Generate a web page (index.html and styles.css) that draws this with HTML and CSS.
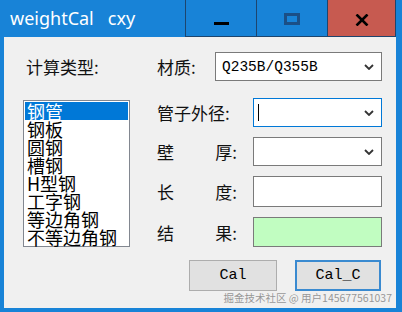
FILE: index.html
```html
<!DOCTYPE html>
<html lang="zh-CN">
<head>
    <meta charset="UTF-8">
    <title>weightCal</title>
    <link rel="stylesheet" href="styles.css">
</head>
<body>

<div class="window">
    <div class="titlebar">
        <span class="title">weightCal&nbsp;&nbsp; cxy</span>
        <div class="cap-btn"><span class="min-bar"></span></div>
        <div class="cap-btn"><span class="max-box"></span></div>
        <div class="cap-btn close">
            <svg width="14" height="12" viewBox="0 0 14 12">
                <path d="M1.5 0.5 L12.5 11.5 M12.5 0.5 L1.5 11.5" stroke="#000" stroke-width="2.6" fill="none"/>
            </svg>
        </div>
    </div>

    <div class="client">
        <div class="form">
            <div class="lbl type-lbl">计算类型:</div>

            <div class="row">
                <span class="lbl short">材质:</span>
                <div class="combo wide">
                    <span class="val">Q235B/Q355B</span>
                    <svg class="chev" width="10" height="6" viewBox="0 0 10 6"><path d="M1 1 L5 5 L9 1" stroke="#333" stroke-width="1.8" fill="none"/></svg>
                </div>
            </div>

            <ul class="listbox">
                <li class="sel">钢管</li>
                <li>钢板</li>
                <li>圆钢</li>
                <li>槽钢</li>
                <li>H型钢</li>
                <li>工字钢</li>
                <li>等边角钢</li>
                <li>不等边角钢</li>
            </ul>

            <div class="fields">
                <div class="row">
                    <span class="lbl">管子外径:</span>
                    <div class="combo focus">
                        <span class="caret"></span>
                        <svg class="chev" width="10" height="6" viewBox="0 0 10 6"><path d="M1 1 L5 5 L9 1" stroke="#333" stroke-width="1.8" fill="none"/></svg>
                    </div>
                </div>
                <div class="row">
                    <span class="lbl spread"><span>壁</span><span>厚:</span></span>
                    <div class="combo">
                        <svg class="chev" width="10" height="6" viewBox="0 0 10 6"><path d="M1 1 L5 5 L9 1" stroke="#333" stroke-width="1.8" fill="none"/></svg>
                    </div>
                </div>
                <div class="row tall">
                    <span class="lbl spread"><span>长</span><span>度:</span></span>
                    <div class="edit"></div>
                </div>
                <div class="row tall2">
                    <span class="lbl spread"><span>结</span><span>果:</span></span>
                    <div class="edit result"></div>
                </div>
                <div class="buttons">
                    <button class="btn cal">Cal</button>
                    <button class="btn cal-c">Cal_C</button>
                </div>
            </div>
        </div>

        <div class="watermark">掘金技术社区 @ 用户145677561037</div>
    </div>
</div>

</body>
</html>
```

FILE: styles.css
```css
body {
    margin: 0;
    font-family: "Noto Sans CJK SC", sans-serif;
}

.window {
    width: 402px;
    height: 312px;
    background: #1883d7;
    display: flex;
    flex-direction: column;
    padding-bottom: 4px;
    box-sizing: border-box;
}

.titlebar {
    height: 37px;
    display: flex;
    padding-right: 6px;
    flex-shrink: 0;
}

.title {
    flex: 1;
    color: #fff;
    font-family: "Noto Sans", sans-serif;
    font-size: 18px;
    line-height: 37px;
    padding-left: 10px;
}

.cap-btn {
    width: 70px;
    border-left: 1px solid #1d456e;
    border-bottom: 1px solid #1d456e;
    display: flex;
    align-items: center;
    justify-content: center;
}

.cap-btn.close {
    width: 67px;
    background: #c75a50;
    border-right: 1px solid #1d456e;
}

.min-bar {
    width: 15px;
    height: 3px;
    background: #000;
    margin-top: 10px;
}

.max-box {
    width: 10px;
    height: 6px;
    border: 3px solid #1b4f86;
    margin-top: 1px;
}

.close svg {
    margin-top: 3px;
}

.client {
    flex: 1;
    margin: 0 6px 0 4px;
    background: #f0f0f0;
    position: relative;
    padding: 15px 0 0 19px;
}

.form {
    display: grid;
    grid-template-columns: 107px 225px;
    column-gap: 27px;
    row-gap: 17px;
    align-items: start;
}

.lbl {
    font-size: 17px;
    color: #111;
    white-space: nowrap;
}

.type-lbl {
    line-height: 29px;
    padding-left: 3px;
}

.row {
    display: flex;
    align-items: center;
    height: 29px;
}

.row.tall {
    height: 31px;
}

.row.tall2 {
    height: 30px;
}

.row .lbl {
    width: 96px;
    flex-shrink: 0;
}

.row .lbl.short {
    width: 58px;
}

/* 两个字的标签拉开，冒号和“管子外径:”对齐 */
.row .lbl.spread {
    display: flex;
    justify-content: space-between;
    width: 80px;
    margin-right: 16px;
}

.combo,
.edit {
    flex: 1;
    align-self: stretch;
    background: #fff;
    border: 1px solid #7a7a7a;
    display: flex;
    align-items: center;
    position: relative;
}

.combo.focus {
    border-color: #0078d7;
}

.val {
    font-family: "Liberation Mono", monospace;
    font-size: 14.5px;
    padding-left: 6px;
    flex: 1;
    color: #000;
}

.caret {
    width: 1px;
    height: 17px;
    background: #000;
    margin-left: 4px;
}

.chev {
    margin-left: auto;
    margin-right: 7px;
}

.edit.result {
    background: #c1fdc1;
}

.listbox {
    list-style: none;
    margin: 2px 0 0;
    padding: 1px;
    background: #fff;
    border: 1px solid #828790;
    height: 143px;
}

.listbox li {
    font-size: 18px;
    line-height: 18px;
    height: 18px;
    padding-left: 2px;
    color: #000;
    white-space: nowrap;
}

.listbox li.sel {
    background: #0078d7;
    color: #fff;
}

.fields {
    display: flex;
    flex-direction: column;
    gap: 10px;
}

.buttons {
    display: flex;
    gap: 18px;
    margin: 3px 0 0 32px;
}

.btn {
    height: 31px;
    background: #e1e1e1;
    border: 1px solid #adadad;
    font-family: "Liberation Mono", monospace;
    font-size: 15px;
    color: #000;
    padding: 0;
}

.btn.cal {
    width: 88px;
}

.btn.cal-c {
    width: 86px;
    border: 2px solid #3a8ad0;
}

.watermark {
    position: absolute;
    right: 4px;
    bottom: 3px;
    font-size: 10.5px;
    color: rgba(110, 110, 110, 0.7);
    white-space: nowrap;
}
```
